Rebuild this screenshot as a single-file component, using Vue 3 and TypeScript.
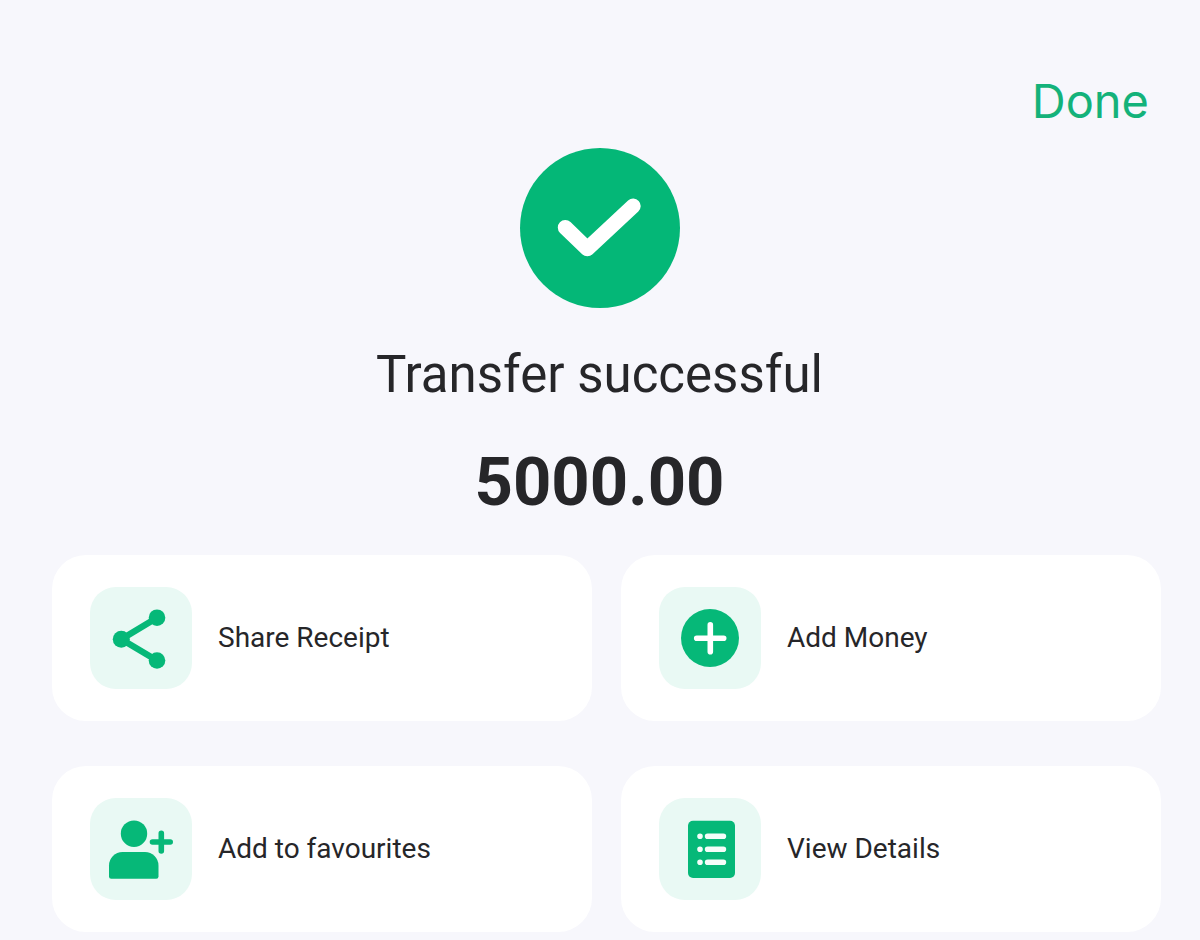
<script setup lang="ts">
type IconName = 'share' | 'add' | 'favourite' | 'details'

interface Action {
  icon: IconName
  label: string
}

const amount = 5000

const actions: Action[] = [
  { icon: 'share', label: 'Share Receipt' },
  { icon: 'add', label: 'Add Money' },
  { icon: 'favourite', label: 'Add to favourites' },
  { icon: 'details', label: 'View Details' },
]
</script>

<template>
  <div class="page">
    <header class="topbar">
      <button type="button" class="done">Done</button>
    </header>

    <main>
      <section class="status">
        <svg class="badge" viewBox="0 0 160 160" aria-hidden="true">
          <circle cx="80" cy="80" r="80" fill="#04b777" />
          <path
            d="M45.3 79.5 67.4 100.8 113.2 58"
            fill="none"
            stroke="#fff"
            stroke-width="15"
            stroke-linecap="round"
            stroke-linejoin="round"
          />
        </svg>
        <h1 class="title">Transfer successful</h1>
        <p class="amount">{{ amount.toFixed(2) }}</p>
      </section>

      <nav class="actions">
        <button v-for="action in actions" :key="action.icon" type="button" class="card">
          <span class="tile">
            <svg viewBox="0 0 102 102" aria-hidden="true">
              <g v-if="action.icon === 'share'" fill="#06b878">
                <path d="M67 30.7 31.3 52.2 67 73.5" fill="none" stroke="#06b878" stroke-width="6.4" />
                <circle cx="67" cy="30.7" r="8.3" />
                <circle cx="31.3" cy="52.2" r="8.5" />
                <circle cx="67" cy="73.5" r="8.3" />
              </g>
              <g v-else-if="action.icon === 'add'">
                <circle cx="51" cy="51" r="29" fill="#06b878" />
                <path d="M37.7 51.3H64.7M51.3 37.8V64.8" stroke="#fff" stroke-width="5.6" stroke-linecap="round" />
              </g>
              <g v-else-if="action.icon === 'favourite'" fill="#06b878">
                <circle cx="44" cy="35.7" r="13.2" />
                <path d="M19 67.5A13.5 13.5 0 0 1 32.5 54H55A13.5 13.5 0 0 1 68.5 67.5V78.5A2.2 2.2 0 0 1 66.3 80.7H21.2A2.2 2.2 0 0 1 19 78.5Z" />
                <path d="M62.5 44H80.2M71.3 35.2V53" stroke="#06b878" stroke-width="5.6" stroke-linecap="round" />
              </g>
              <g v-else>
                <rect x="29" y="22.7" width="47" height="57.3" rx="5" fill="#06b878" />
                <path
                  d="M41 38.3H41.01M41 51.3H41.01M41 64.2H41.01M48.6 38.3H64.4M48.6 51.3H64.4M48.6 64.2H64.4"
                  stroke="#f4fdf9"
                  stroke-width="5.6"
                  stroke-linecap="round"
                />
              </g>
            </svg>
          </span>
          <span class="label">{{ action.label }}</span>
        </button>
      </nav>
    </main>
  </div>
</template>

<style>
body {
  margin: 0;
  background: #f7f7fc;
}
</style>

<style scoped>
.page {
  box-sizing: border-box;
  min-height: 100vh;
  padding: 73px 39px 8px 52px;
  color: #262629;
  font-family: Roboto, 'Liberation Sans', sans-serif;
}

button {
  margin: 0;
  padding: 0;
  border: 0;
  color: inherit;
  font-family: inherit;
  text-align: left;
  cursor: pointer;
}

.topbar {
  display: flex;
  justify-content: flex-end;
  padding-right: 12px;
}

.done {
  background: none;
  color: #14b27a;
  font-family: Inter, Roboto, sans-serif;
  font-size: 47px;
  line-height: 56px;
}

.status {
  display: flex;
  flex-direction: column;
  align-items: center;
  padding: 19px 14px 0 0;
}

.badge {
  width: 160px;
  height: 160px;
}

.title {
  margin: 37px 0 0;
  font-size: 51px;
  font-weight: 400;
  line-height: 60px;
}

.amount {
  margin: 37px 0 0;
  font-size: 67px;
  font-weight: 700;
  line-height: 80px;
}

.actions {
  display: grid;
  grid-template-columns: 1fr 1fr;
  gap: 45px 29px;
  margin-top: 33px;
}

.card {
  display: flex;
  align-items: center;
  gap: 26px;
  padding: 32px 38px;
  border-radius: 34px;
  background: #fff;
}

.tile {
  flex: none;
  width: 102px;
  height: 102px;
  border-radius: 26px;
  background: #e9f9f4;
}

.tile svg {
  display: block;
  width: 100%;
  height: 100%;
}

.label {
  font-size: 28px;
  line-height: 32px;
}
</style>
